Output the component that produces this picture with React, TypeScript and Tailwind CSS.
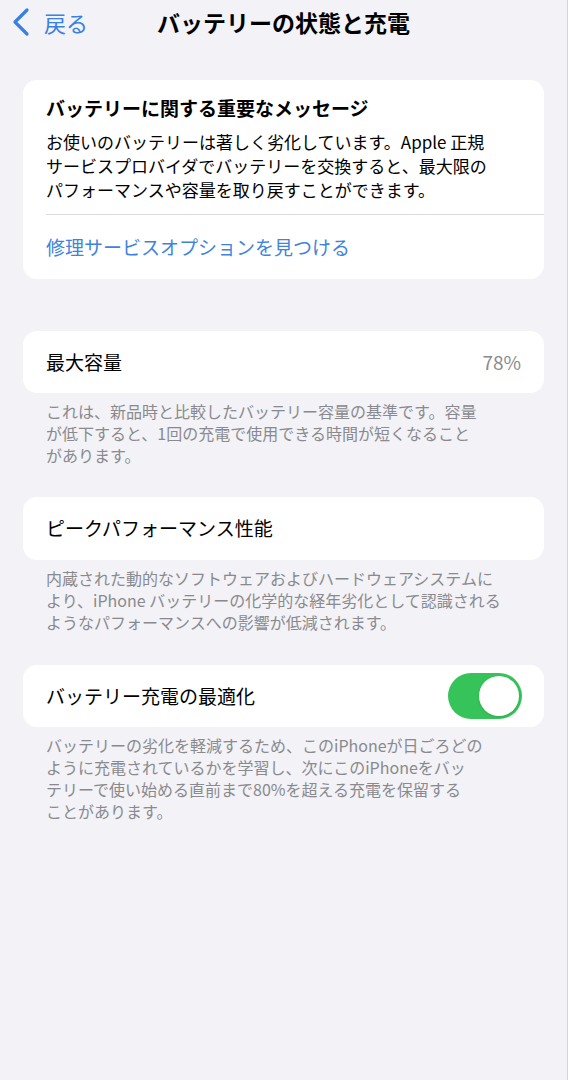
import { useState } from 'react'

const font = { fontFamily: '"Noto Sans CJK JP", "Noto Sans", sans-serif' }

function Toggle({ on, onChange }: { on: boolean; onChange: () => void }) {
  return (
    <button
      onClick={onChange}
      className={`relative h-[46px] w-[74px] rounded-full transition-colors ${
        on ? 'bg-[#36c35a]' : 'bg-[#e3e3e8]'
      }`}
    >
      <span
        className={`absolute top-[3px] h-[40px] w-[40px] rounded-full bg-white shadow transition-all ${
          on ? 'left-[31px]' : 'left-[3px]'
        }`}
      />
    </button>
  )
}

function Footer({ children }: { children: React.ReactNode }) {
  return (
    <p className="mt-[7px] px-[23px] text-[16px] leading-[22px] text-[#8a8a8e]">
      {children}
    </p>
  )
}

export default function App() {
  const [optimized, setOptimized] = useState(true)

  return (
    <div
      style={font}
      className="min-h-[1080px] w-full border-r border-[#d6d6da] bg-[#f2f2f7] text-black"
    >
      {/* ヘッダー */}
      <header className="relative flex h-[44px] items-center">
        <button className="absolute left-[10px] top-[7px] flex items-center gap-[12px] text-[#3a80e2]">
          <svg width="22" height="30" viewBox="0 0 22 30" fill="none">
            <path
              d="M17 3 L5 15 L17 27"
              stroke="currentColor"
              strokeWidth="3.2"
              strokeLinecap="round"
              strokeLinejoin="round"
            />
          </svg>
          <span className="text-[22px] leading-[30px]">戻る</span>
        </button>
        <h1 className="w-full text-center text-[23px] font-bold leading-[30px]">
          バッテリーの状態と充電
        </h1>
      </header>

      <main className="px-[23px] pt-[36px] pb-10">
        {/* 重要なメッセージ */}
        <section className="rounded-[14px] bg-white">
          <div className="px-[23px] pt-[15px]">
            <h2 className="text-[19px] font-bold leading-[26px]">
              バッテリーに関する重要なメッセージ
            </h2>
            <p className="mt-[9px] text-[17px] leading-[24px]">
              お使いのバッテリーは著しく劣化しています。Apple 正規
              <br />
              サービスプロバイダでバッテリーを交換すると、最大限の
              <br />
              パフォーマンスや容量を取り戻すことができます。
            </p>
          </div>
          <div className="ml-[23px] mt-[12px] border-t border-[#dcdce0]" />
          <div className="flex h-[64px] items-center px-[23px]">
            <span className="text-[19px] text-[#3f84dc]">
              修理サービスオプションを見つける
            </span>
          </div>
        </section>

        {/* 最大容量 */}
        <section className="mt-[52px]">
          <div className="flex h-[62px] items-center justify-between rounded-[14px] bg-white px-[23px]">
            <span className="text-[19px]">最大容量</span>
            <span className="text-[19px] text-[#8a8a8e]">78%</span>
          </div>
          <Footer>
            これは、新品時と比較したバッテリー容量の基準です。容量
            <br />
            が低下すると、1回の充電で使用できる時間が短くなること
            <br />
            があります。
          </Footer>
        </section>

        {/* ピークパフォーマンス性能 */}
        <section className="mt-[31px]">
          <div className="flex h-[63px] items-center rounded-[14px] bg-white px-[23px]">
            <span className="text-[19px]">ピークパフォーマンス性能</span>
          </div>
          <Footer>
            内蔵された動的なソフトウェアおよびハードウェアシステムに
            <br />
            より、iPhone バッテリーの化学的な経年劣化として認識される
            <br />
            ようなパフォーマンスへの影響が低減されます。
          </Footer>
        </section>

        {/* 充電の最適化 */}
        <section className="mt-[32px]">
          <div className="flex h-[62px] items-center justify-between rounded-[14px] bg-white pl-[23px] pr-[22px]">
            <span className="text-[19px]">バッテリー充電の最適化</span>
            <Toggle on={optimized} onChange={() => setOptimized(!optimized)} />
          </div>
          <Footer>
            バッテリーの劣化を軽減するため、このiPhoneが日ごろどの
            <br />
            ように充電されているかを学習し、次にこのiPhoneをバッ
            <br />
            テリーで使い始める直前まで80%を超える充電を保留する
            <br />
            ことがあります。
          </Footer>
        </section>
      </main>
    </div>
  )
}
